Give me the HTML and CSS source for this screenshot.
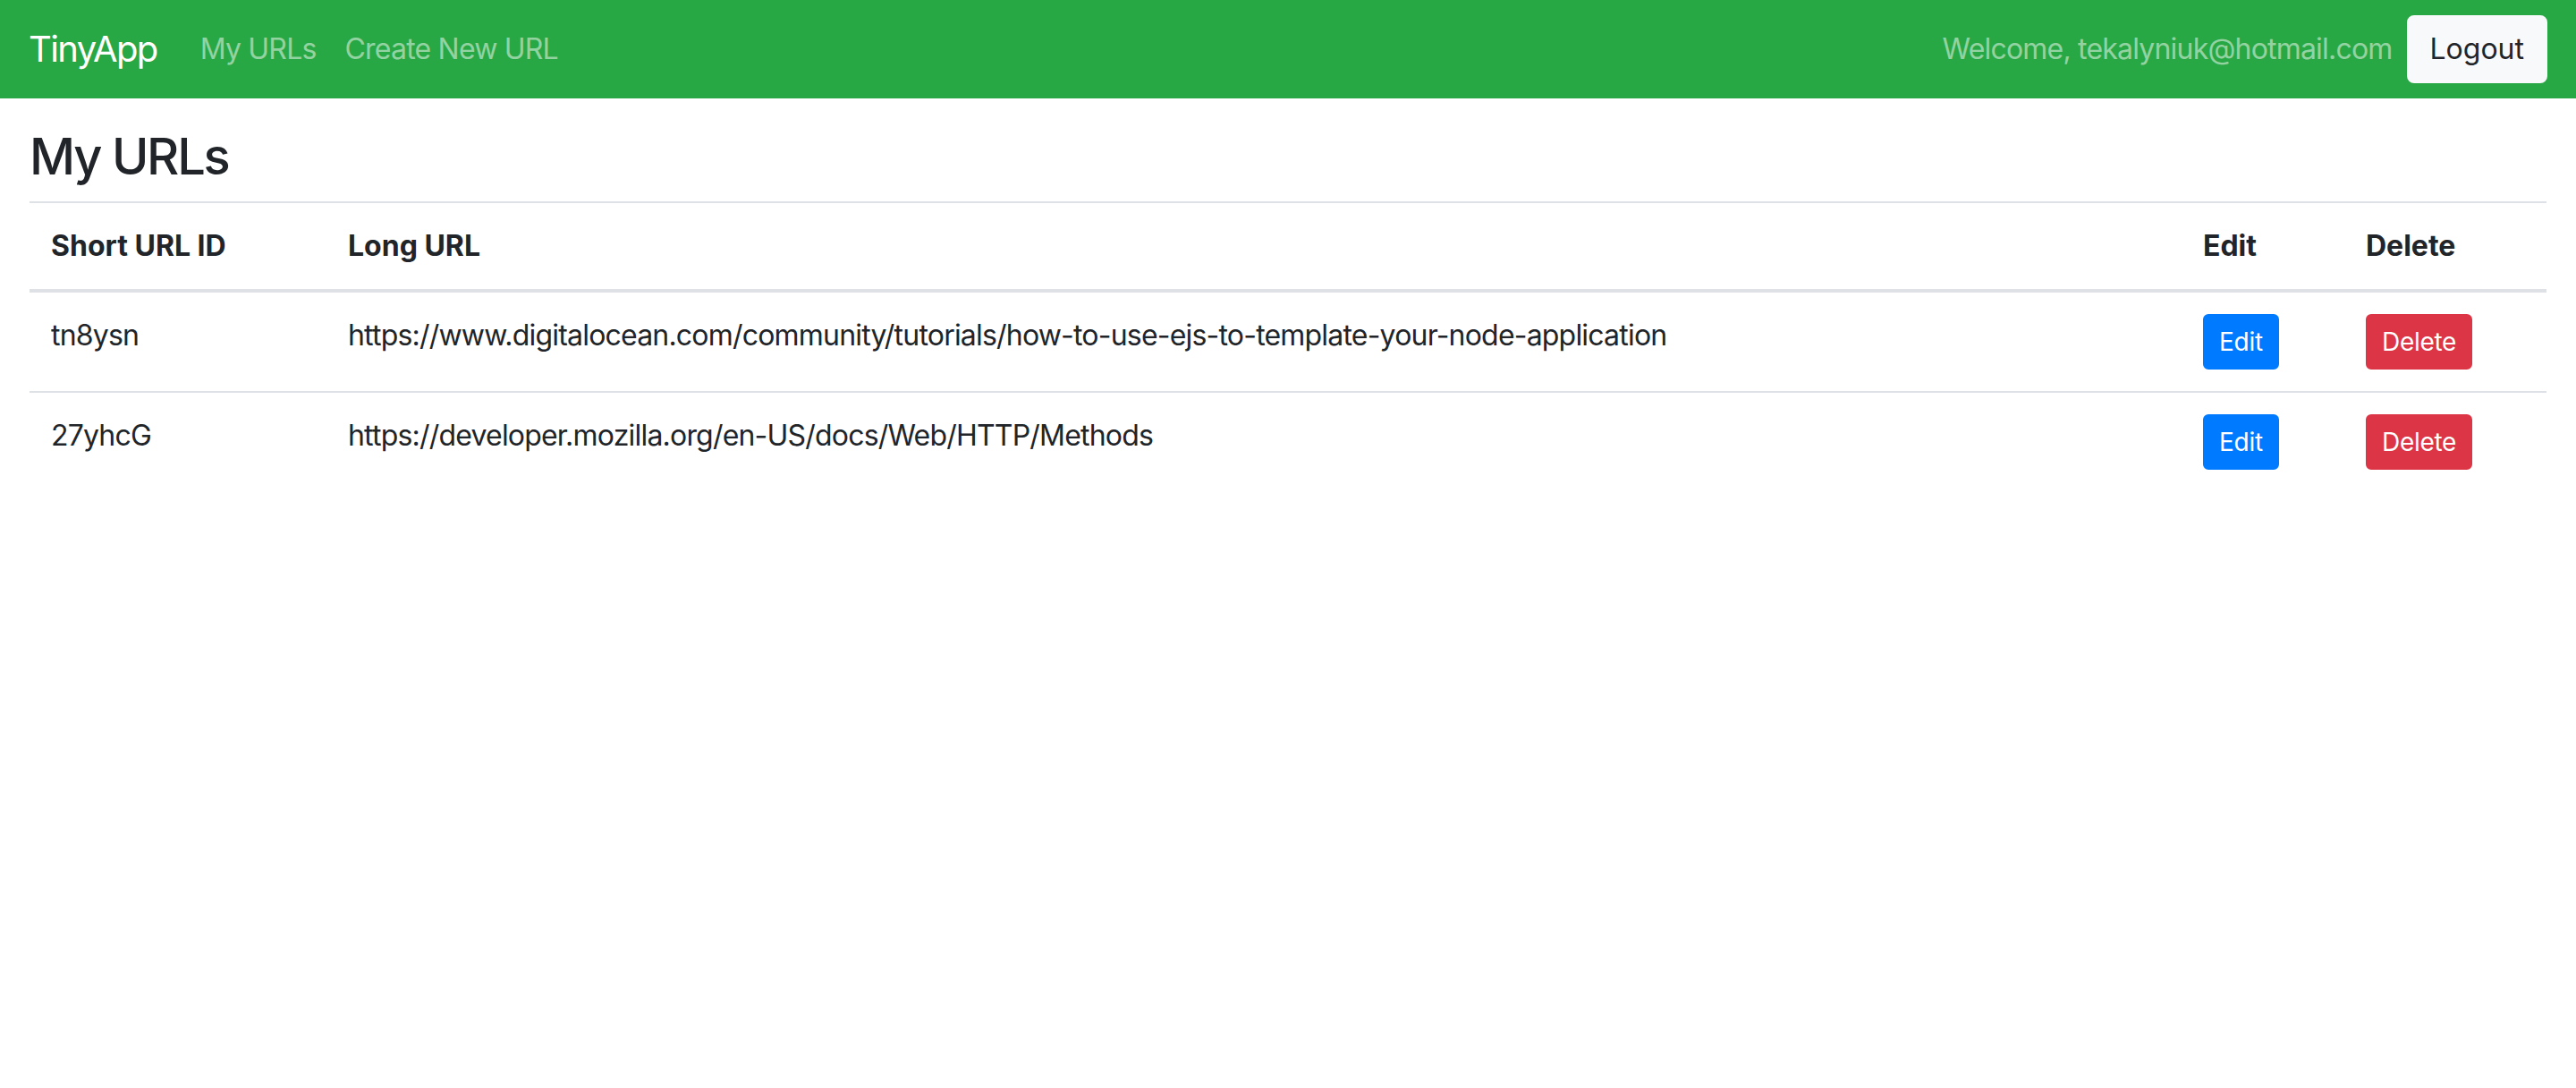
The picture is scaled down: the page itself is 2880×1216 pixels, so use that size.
FILE: index.html
```html
<!DOCTYPE html>
<html lang="en">
<head>
<meta charset="utf-8">
<title>TinyApp</title>
<link rel="stylesheet" href="styles.css">
</head>
<body>
<nav class="navbar">
  <div class="nav-left">
    <a class="brand" href="#">TinyApp</a>
    <a class="nav-link" href="#">My URLs</a>
    <a class="nav-link" href="#">Create New URL</a>
  </div>
  <div class="nav-right">
    <span class="nav-text">Welcome, tekalyniuk@hotmail.com</span>
    <button class="btn btn-light">Logout</button>
  </div>
</nav>
<main class="container">
  <h3 class="title">My URLs</h3>
  <table class="table">
    <colgroup>
      <col class="c1"><col class="c2"><col class="c3"><col class="c4">
    </colgroup>
    <thead>
      <tr><th>Short URL ID</th><th>Long URL</th><th>Edit</th><th>Delete</th></tr>
    </thead>
    <tbody>
      <tr>
        <td>tn8ysn</td>
        <td>https://www.digitalocean.com/community/tutorials/how-to-use-ejs-to-template-your-node-application</td>
        <td><button class="btn btn-sm btn-primary">Edit</button></td>
        <td><button class="btn btn-sm btn-danger">Delete</button></td>
      </tr>
      <tr>
        <td>27yhcG</td>
        <td>https://developer.mozilla.org/en-US/docs/Web/HTTP/Methods</td>
        <td><button class="btn btn-sm btn-primary">Edit</button></td>
        <td><button class="btn btn-sm btn-danger">Delete</button></td>
      </tr>
    </tbody>
  </table>
</main>
</body>
</html>
```

FILE: styles.css
```css
* { box-sizing: border-box; }
html, body { margin: 0; padding: 0; }
body {
  font-family: Inter, "Noto Sans", "Liberation Sans", sans-serif;
  font-size: 32px;
  line-height: 1.5;
  color: #212529;
  background: #fff;
  letter-spacing: -0.025em;
}
a { text-decoration: none; }

.navbar {
  display: flex;
  align-items: center;
  justify-content: space-between;
  background: #28a745;
  padding: 16px 32px;
}
.nav-left, .nav-right {
  display: flex;
  align-items: center;
}
.brand {
  color: #fff;
  font-size: 40px;
  line-height: 60px;
  padding: 9px 0;
  margin-right: 32px;
  letter-spacing: -0.04em;
}
.nav-link {
  color: rgba(255,255,255,0.5);
  padding: 15px 16px;
  line-height: 48px;
}
.nav-text {
  color: rgba(255,255,255,0.5);
  line-height: 48px;
  margin-right: 16px;
}
.btn {
  font-family: inherit;
  display: inline-block;
  font-weight: 400;
  border: 2px solid transparent;
  cursor: pointer;
  text-align: center;
}
.btn-light {
  background: #f8f9fa;
  border-color: #f8f9fa;
  color: #212529;
  font-size: 32px;
  line-height: 48px;
  padding: 12px 24px;
  border-radius: 8px;
}
.btn-sm {
  font-size: 28px;
  line-height: 42px;
  padding: 8px 16px;
  border-radius: 6px;
  color: #fff;
  letter-spacing: -0.01em;
}
.btn-primary { background: #007bff; border-color: #007bff; }
.btn-danger { background: #dc3545; border-color: #dc3545; }

.container {
  padding: 0 33px;
}
.title {
  font-size: 56px;
  font-weight: 500;
  line-height: 1.2;
  margin: 32px 0 16px;
  letter-spacing: -0.04em;
}
.table {
  width: 100%;
  border-collapse: collapse;
  table-layout: fixed;
}
.c1 { width: 332px; }
.c3 { width: 182px; }
.c4 { width: 226px; }
.table th, .table td {
  padding: 24px;
  vertical-align: top;
  border-top: 2px solid #dee2e6;
  text-align: left;
}
.table th { font-weight: 700; letter-spacing: 0; }
.table thead th { border-bottom: 4px solid #dee2e6; }
```
